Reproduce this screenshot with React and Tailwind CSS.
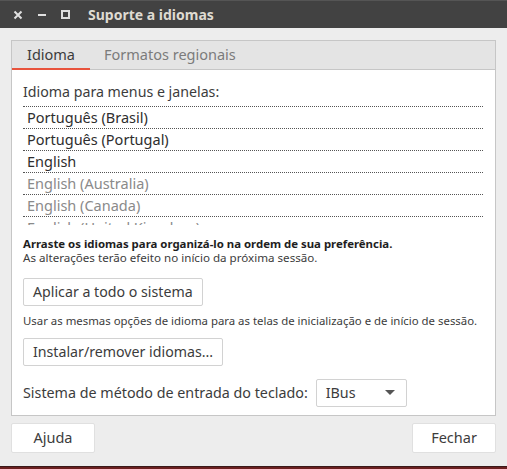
import React from "react";

const rows = [
  { t: "Português (Brasil)", dim: false },
  { t: "Português (Portugal)", dim: false },
  { t: "English", dim: false },
  { t: "English (Australia)", dim: true },
  { t: "English (Canada)", dim: true },
  { t: "English (United Kingdom)", dim: true },
];

export default function App() {
  return (
    <div
      className="w-[507px] h-[469px] bg-[#ededed] flex flex-col overflow-hidden text-[#3c3c3c]"
      style={{ fontFamily: '"Noto Sans", "Open Sans", sans-serif' }}
    >
      {/* title bar */}
      <div className="h-[28px] bg-[#424242] border-t border-[#555] flex items-center shrink-0">
        <div className="w-[34px] flex justify-center pl-[1px]">
          <svg width="10" height="10" viewBox="0 0 10 10">
            <path d="M1.5 1.5 L8.5 8.5 M8.5 1.5 L1.5 8.5" stroke="#e0e0e0" strokeWidth="2" />
          </svg>
        </div>
        <div className="w-[16px] flex justify-center">
          <div className="w-[8px] h-[2px] bg-[#e0e0e0]" />
        </div>
        <div className="w-[30px] flex justify-center">
          <div className="w-[9px] h-[9px] border-2 border-[#e0e0e0]" />
        </div>
        <div className="ml-[8px] text-[14px] font-bold text-[#dfdbd2] leading-none">Suporte a idiomas</div>
      </div>

      {/* notebook */}
      <div className="px-[11px] pt-[12px] shrink-0">
        <div className="border border-[#c6c6c6] h-[376px] flex flex-col overflow-hidden">
          <div className="h-[29px] bg-[#e4e4e4] border-b border-[#c6c6c6] flex items-stretch shrink-0">
            <div className="w-[78px] relative flex items-center justify-center text-[14.5px] text-[#3c3c3c]">
              Idioma
              <div className="absolute left-0 right-0 bottom-[-1px] h-[2px] bg-[#e8533c]" />
            </div>
            <div className="ml-[14px] flex items-center text-[14.5px] text-[#7b7b7b]">Formatos regionais</div>
          </div>
          <div className="flex-1 bg-white px-[11px] pt-[12px] flex flex-col">
            <div className="text-[14.2px] leading-[20px]">Idioma para menus e janelas:</div>
            <div className="mt-[4px] h-[119px] overflow-hidden border-t border-dotted border-[#555] mr-[1px] shrink-0">
              {rows.map((r) => (
                <div
                  key={r.t}
                  className={`h-[22px] border-b border-dotted border-[#555] flex items-center pl-[4px] text-[14.5px] ${
                    r.dim ? "text-[#8a8a8a]" : "text-[#2e2e2e]"
                  }`}
                >
                  {r.t}
                </div>
              ))}
            </div>
            <div className="mt-[12px] text-[11.4px] leading-[14px] font-bold text-[#1e1e1e] whitespace-nowrap">
              Arraste os idiomas para organizá-lo na ordem de sua preferência.
            </div>
            <div className="text-[11.6px] leading-[13px] whitespace-nowrap">
              As alterações terão efeito no início da próxima sessão.
            </div>
            <div className="mt-[14px]">
              <button className="h-[28px] px-[9px] bg-white border border-[#d2d2d2] rounded-[2px] text-[14.2px] text-[#3c3c3c]">
                Aplicar a todo o sistema
              </button>
            </div>
            <div className="mt-[7px] text-[11.4px] leading-[16px] whitespace-nowrap">
              Usar as mesmas opções de idioma para as telas de inicialização e de início de sessão.
            </div>
            <div className="mt-[9px]">
              <button className="h-[28px] px-[9px] bg-white border border-[#d2d2d2] rounded-[2px] text-[14.2px] text-[#3c3c3c]">
                Instalar/remover idiomas...
              </button>
            </div>
            <div className="mt-[13px] flex items-center">
              <div className="text-[14.3px] whitespace-nowrap">Sistema de método de entrada do teclado:</div>
              <div className="ml-[8px] w-[91px] h-[28px] bg-white border border-[#d2d2d2] rounded-[2px] flex items-center justify-between pl-[9px] pr-[11px] text-[14.3px]">
                <span>IBus</span>
                <svg width="10" height="6" viewBox="0 0 10 6">
                  <path d="M0 0 L10 0 L5 5 Z" fill="#555" />
                </svg>
              </div>
            </div>
          </div>
        </div>
      </div>

      {/* bottom buttons */}
      <div className="px-[11px] mt-[7px] flex justify-between shrink-0">
        <button className="w-[84px] h-[30px] bg-white border border-[#e0e0e0] rounded-[2px] text-[14.5px] text-[#3c3c3c]">
          Ajuda
        </button>
        <button className="w-[84px] h-[30px] bg-white border border-[#e0e0e0] rounded-[2px] text-[14.5px] text-[#3c3c3c]">
          Fechar
        </button>
      </div>
      <div className="flex-1" />
      <div className="h-[3px] bg-[#6b2020] border-t border-[#3a1a1a] shrink-0" />
    </div>
  );
}
